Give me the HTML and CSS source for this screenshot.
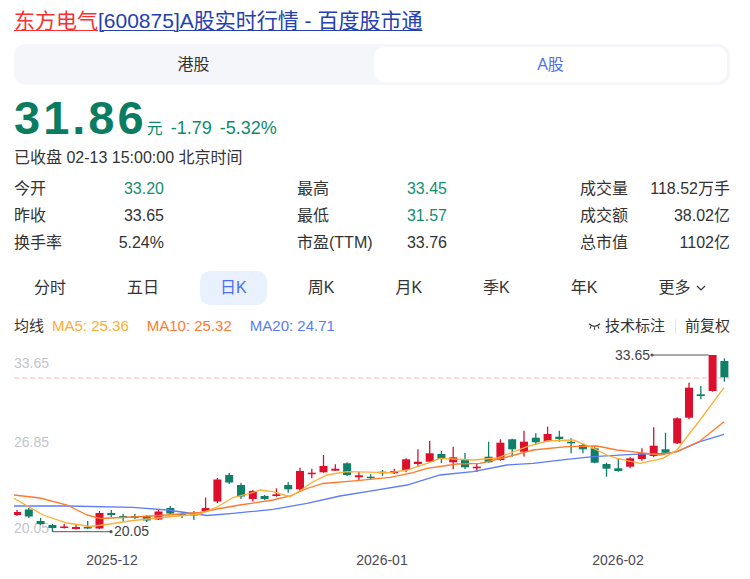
FILE: index.html
```html
<!DOCTYPE html>
<html lang="zh-CN">
<head>
<meta charset="utf-8">
<title>东方电气[600875]A股实时行情 - 百度股市通</title>
<link rel="stylesheet" href="styles.css">
</head>
<body>
<div class="page">
  <h1 class="title"><a class="t-red" href="#">东方电气</a><a class="t-blue" href="#">[600875]A股实时行情 - 百度股市通</a></h1>

  <div class="mkt-tabs">
    <div class="mkt-tab">港股</div>
    <div class="mkt-tab active">A股</div>
  </div>

  <div class="price-row">
    <span class="price">31.86</span><span class="unit">元</span><span class="chg">-1.79</span><span class="chg">-5.32%</span>
  </div>
  <div class="status">已收盘 02-13 15:00:00 北京时间</div>

  <div class="stats">
    <div class="stat"><span>今开</span><span class="green">33.20</span></div>
    <div class="stat"><span>最高</span><span class="green">33.45</span></div>
    <div class="stat"><span>成交量</span><span>118.52万手</span></div>
    <div class="stat"><span>昨收</span><span>33.65</span></div>
    <div class="stat"><span>最低</span><span class="green">31.57</span></div>
    <div class="stat"><span>成交额</span><span>38.02亿</span></div>
    <div class="stat"><span>换手率</span><span>5.24%</span></div>
    <div class="stat"><span>市盈(TTM)</span><span>33.76</span></div>
    <div class="stat"><span>总市值</span><span>1102亿</span></div>
  </div>

  <div class="periods">
    <div class="period">分时</div>
    <div class="period">五日</div>
    <div class="period active">日K</div>
    <div class="period">周K</div>
    <div class="period">月K</div>
    <div class="period">季K</div>
    <div class="period">年K</div>
    <div class="period">更多<svg class="chev" width="10" height="6" viewBox="0 0 10 6"><path d="M1 1 L5 5 L9 1" fill="none" stroke="#333" stroke-width="1.2"/></svg></div>
  </div>

  <div class="legend">
    <span class="lg-title">均线</span>
    <span class="ma5">MA5: 25.36</span>
    <span class="ma10">MA10: 25.32</span>
    <span class="ma20">MA20: 24.71</span>
    <span class="lg-right">
      <svg class="eye" width="13" height="9" viewBox="0 0 13 9"><path d="M1 1.8 Q6.5 7 12 1.8" fill="none" stroke="#333" stroke-width="1.2"/><path d="M3 4.2 L2 6.6 M6.5 5.3 L6.5 7.8 M10 4.2 L11 6.6" stroke="#333" stroke-width="1.1"/></svg>
      <span>技术标注</span>
      <span class="divider"></span>
      <span>前复权</span>
    </span>
  </div>

  <svg class="chart" width="722" height="234" viewBox="14 345 722 234">
    <text class="axis" x="14" y="368">33.65</text>
    <text class="axis" x="14" y="447">26.85</text>
    <text class="axis" x="14" y="533">20.05</text>
    <line class="cur" x1="14" y1="378" x2="730" y2="378"/>

    <g class="up">
      <line x1="17" y1="510" x2="17" y2="516"/><rect x="13" y="512" width="8" height="3"/>
      <line x1="64.2" y1="524" x2="64.2" y2="528.5"/><rect x="60.2" y="526.5" width="8" height="1.5"/>
      <line x1="76" y1="524" x2="76" y2="529.5"/><rect x="72" y="527" width="8" height="2"/>
      <line x1="99.5" y1="511" x2="99.5" y2="529"/><rect x="95.5" y="513" width="8" height="15.5"/>
      <line x1="158.5" y1="510" x2="158.5" y2="520"/><rect x="154.5" y="511.5" width="8" height="8"/>
      <line x1="205.6" y1="497.5" x2="205.6" y2="511"/><rect x="201.6" y="508" width="8" height="3"/>
      <line x1="217.4" y1="478" x2="217.4" y2="503"/><rect x="213.4" y="479.5" width="8" height="22"/>
      <line x1="252.8" y1="490" x2="252.8" y2="501.5"/><rect x="248.8" y="491" width="8" height="8"/>
      <line x1="276.4" y1="488.3" x2="276.4" y2="496.7"/><rect x="272.4" y="494.3" width="8" height="1.7"/>
      <line x1="300" y1="467.7" x2="300" y2="491.7"/><rect x="296" y="471" width="8" height="18.3"/>
      <line x1="311.8" y1="468.7" x2="311.8" y2="478.3"/><rect x="307.8" y="472.7" width="8" height="1.5"/>
      <line x1="323.5" y1="455" x2="323.5" y2="472.7"/><rect x="319.5" y="466" width="8" height="6.3"/>
      <line x1="335.3" y1="464.3" x2="335.3" y2="471"/><rect x="331.3" y="468.7" width="8" height="2"/>
      <line x1="358.9" y1="471.7" x2="358.9" y2="480"/><rect x="354.9" y="475.3" width="8" height="2"/>
      <line x1="394.3" y1="468.7" x2="394.3" y2="474"/><rect x="390.3" y="471" width="8" height="2.3"/>
      <line x1="406.1" y1="458.3" x2="406.1" y2="472.3"/><rect x="402.1" y="459.3" width="8" height="10.7"/>
      <line x1="417.9" y1="449.3" x2="417.9" y2="466.7"/><rect x="413.9" y="461.7" width="8" height="2.3"/>
      <line x1="429.7" y1="441" x2="429.7" y2="462.3"/><rect x="425.7" y="453.3" width="8" height="8.4"/>
      <line x1="453.2" y1="446.7" x2="453.2" y2="469.3"/><rect x="449.2" y="457.3" width="8" height="5"/>
      <line x1="476.8" y1="463" x2="476.8" y2="472"/><rect x="472.8" y="466.7" width="8" height="1.6"/>
      <line x1="500.4" y1="439.3" x2="500.4" y2="460.7"/><rect x="496.4" y="442.7" width="8" height="17.3"/>
      <line x1="524" y1="430.7" x2="524" y2="456.5"/><rect x="520" y="441.7" width="8" height="10"/>
      <line x1="547.6" y1="426.7" x2="547.6" y2="441.7"/><rect x="543.6" y="434" width="8" height="7"/>
      <line x1="630.1" y1="457.3" x2="630.1" y2="468.3"/><rect x="626.1" y="458.3" width="8" height="8.4"/>
      <line x1="641.9" y1="448.3" x2="641.9" y2="460.7"/><rect x="637.9" y="453.3" width="8" height="5.7"/>
      <line x1="653.7" y1="427.3" x2="653.7" y2="457.3"/><rect x="649.7" y="445.7" width="8" height="10.3"/>
      <line x1="677.2" y1="417.3" x2="677.2" y2="444"/><rect x="673.2" y="418.3" width="8" height="25"/>
      <line x1="689" y1="382.7" x2="689" y2="419.3"/><rect x="685" y="387.7" width="8" height="30"/>
      <line x1="712.6" y1="355" x2="712.6" y2="391.7"/><rect x="708.6" y="355" width="8" height="36"/>
    </g>

    <g class="down">
      <line x1="28.8" y1="508" x2="28.8" y2="518"/><rect x="24.8" y="509.5" width="8" height="7"/>
      <line x1="40.6" y1="518" x2="40.6" y2="525"/><rect x="36.6" y="521" width="8" height="3"/>
      <line x1="52.4" y1="524" x2="52.4" y2="531.7"/><rect x="48.4" y="525" width="8" height="3"/>
      <line x1="87.7" y1="521" x2="87.7" y2="529"/><rect x="83.7" y="527" width="8" height="1.5"/>
      <line x1="111.3" y1="510" x2="111.3" y2="517"/><rect x="107.3" y="513" width="8" height="2"/>
      <line x1="123.1" y1="514" x2="123.1" y2="521"/><rect x="119.1" y="516" width="8" height="2"/>
      <line x1="134.9" y1="514" x2="134.9" y2="519"/><rect x="130.9" y="516" width="8" height="2"/>
      <line x1="146.7" y1="515" x2="146.7" y2="522"/><rect x="142.7" y="516" width="8" height="4.5"/>
      <line x1="170.3" y1="506" x2="170.3" y2="515"/><rect x="166.3" y="508" width="8" height="5.5"/>
      <line x1="182.1" y1="512" x2="182.1" y2="518"/><rect x="178.1" y="514" width="8" height="1.5"/>
      <line x1="193.9" y1="511" x2="193.9" y2="520"/><rect x="189.9" y="514" width="8" height="1.5"/>
      <line x1="229.2" y1="473" x2="229.2" y2="484"/><rect x="225.2" y="475" width="8" height="7.5"/>
      <line x1="241" y1="483" x2="241" y2="499"/><rect x="237" y="485" width="8" height="11.5"/>
      <line x1="264.6" y1="495" x2="264.6" y2="500"/><rect x="260.6" y="496" width="8" height="3"/>
      <line x1="288.2" y1="482" x2="288.2" y2="492.7"/><rect x="284.2" y="485" width="8" height="4.3"/>
      <line x1="347.1" y1="462.3" x2="347.1" y2="476"/><rect x="343.1" y="463.3" width="8" height="11.7"/>
      <line x1="370.7" y1="474.3" x2="370.7" y2="479.3"/><rect x="366.7" y="476.7" width="8" height="1.5"/>
      <line x1="382.5" y1="470" x2="382.5" y2="476"/><rect x="378.5" y="471.7" width="8" height="1.6"/>
      <line x1="441.4" y1="451" x2="441.4" y2="463"/><rect x="437.4" y="454" width="8" height="5"/>
      <line x1="465" y1="453" x2="465" y2="469"/><rect x="461" y="460" width="8" height="7.3"/>
      <line x1="488.6" y1="441.7" x2="488.6" y2="462.7"/><rect x="484.6" y="456.7" width="8" height="5.6"/>
      <line x1="512.2" y1="438.7" x2="512.2" y2="456.7"/><rect x="508.2" y="439.3" width="8" height="10"/>
      <line x1="535.8" y1="433.3" x2="535.8" y2="445"/><rect x="531.8" y="437.7" width="8" height="4.6"/>
      <line x1="559.3" y1="430.7" x2="559.3" y2="441.7"/><rect x="555.3" y="436.7" width="8" height="2.3"/>
      <line x1="571.1" y1="438.3" x2="571.1" y2="453.3"/><rect x="567.1" y="441.7" width="8" height="1.6"/>
      <line x1="582.9" y1="443.3" x2="582.9" y2="453.3"/><rect x="578.9" y="445" width="8" height="4.3"/>
      <line x1="594.7" y1="447.3" x2="594.7" y2="463.3"/><rect x="590.7" y="448.3" width="8" height="14.4"/>
      <line x1="606.5" y1="462.7" x2="606.5" y2="476.7"/><rect x="602.5" y="464" width="8" height="4.7"/>
      <line x1="618.3" y1="458.3" x2="618.3" y2="471.7"/><rect x="614.3" y="468.3" width="8" height="2.7"/>
      <line x1="665.5" y1="432.7" x2="665.5" y2="453.3"/><rect x="661.5" y="449.3" width="8" height="3.4"/>
      <line x1="700.8" y1="386" x2="700.8" y2="399.3"/><rect x="696.8" y="394.3" width="8" height="1.7"/>
      <line x1="724.4" y1="358.3" x2="724.4" y2="381.7"/><rect x="720.4" y="361" width="8" height="16.3"/>
    </g>

    <polyline class="ma20l" points="14,506 67,506 133,507.3 167,510 207,515.5 233,513.3 250,511.7 273,509.3 307,503.3 340,496 373,490.7 407,485 440,475 473,471.7 507,465 533,463.3 567,459.3 593,456.7 633,454.3 667,453.3 677,451.7 700,441.7 724,434.3"/>
    <polyline class="ma10l" points="14,495 40,498 67,505 87,515 100,518.5 133,517 167,515 200,512.5 217,509 240,505 273,500 290,496 307,488.5 323,483.5 357,480.7 390,477.3 413,472.7 427,468.3 457,464 480,463.3 507,457 533,450 567,446.7 597,446 617,450 640,452.7 660,455 677,451.7 700,441 724,421.7"/>
    <polyline class="ma5l" points="14,498.3 43,515 67,523 90,526.5 110,524 133,520.5 167,517 200,514 217,507 233,497.5 250,493.5 260,490 273,491.7 290,496.7 300,490.7 313,481.7 327,475 347,471.7 390,472.7 407,470 427,463.3 440,458.3 473,460 497,458 527,446.7 547,441 573,440 590,446.7 607,455 617,458.3 640,463.3 663,458.3 677,450 700,420 724,387.7"/>

    <line class="mk" x1="652" y1="355" x2="708.6" y2="355"/>
    <circle class="mkdot" cx="652" cy="355" r="1.6"/>
    <text class="mktext" x="650" y="359.5" text-anchor="end">33.65</text>
    <line class="mk" x1="52.4" y1="531.7" x2="111" y2="531.7"/>
    <circle class="mkdot" cx="111" cy="531.7" r="1.6"/>
    <text class="mktext" x="114" y="536">20.05</text>

    <text class="date" x="112" y="565" text-anchor="middle">2025-12</text>
    <text class="date" x="382" y="565" text-anchor="middle">2026-01</text>
    <text class="date" x="618" y="565" text-anchor="middle">2026-02</text>
  </svg>
</div>
</body>
</html>
```

FILE: styles.css
```css
* { box-sizing: border-box; }
html, body { margin: 0; padding: 0; background: #fff; }
body {
  font-family: "Liberation Sans", "Noto Sans CJK SC", sans-serif;
  color: #333;
  font-size: 16px;
}
.page {
  width: 716px;
  margin-left: 14px;
  padding-top: 8px;
}
.title {
  margin: 0;
  font-size: 21px;
  font-weight: normal;
  line-height: 26px;
  white-space: nowrap;
}
.title a { text-decoration: underline; text-underline-offset: 2px; text-decoration-thickness: 1px; }
.t-red { color: #f73131; }
.t-blue { color: #2440b3; }

.mkt-tabs {
  margin-top: 10px;
  height: 41px;
  padding: 3px;
  background: #f5f6f9;
  border-radius: 12px;
  display: flex;
  gap: 4px;
}
.mkt-tab {
  flex: 1;
  text-align: center;
  line-height: 35px;
  font-size: 16px;
  color: #333;
  border-radius: 10px;
}
.mkt-tab.active { background: #fff; color: #4e6ef2; }

.price-row {
  margin-top: 10px;
  display: flex;
  align-items: baseline;
  height: 46px;
  color: #0f8a6d;
}
.price {
  font-size: 47px;
  line-height: 46px;
  font-weight: bold;
  letter-spacing: 3px;
  color: #0a7c62;
}
.unit { font-size: 16px; }
.chg { font-size: 18px; margin-left: 8px; }

.status {
  margin-top: 6px;
  line-height: 22px;
  font-size: 16px;
  color: #333;
}

.stats {
  margin-top: 6px;
  display: grid;
  grid-template-columns: repeat(3, 150px);
  justify-content: space-between;
  font-size: 16px;
  line-height: 27px;
}
.stat { display: flex; justify-content: space-between; white-space: nowrap; }
.green { color: #12906f; }

.periods {
  margin-top: 15px;
  display: flex;
  gap: 21px;
}
.period {
  padding: 0 20px;
  height: 34px;
  line-height: 34px;
  font-size: 16px;
  color: #333;
  border-radius: 10px;
  white-space: nowrap;
  display: flex;
  align-items: center;
}
.period.active { background: #e9f1ff; color: #4e6ef2; }
.chev { margin-left: 6px; }

.legend {
  margin-top: 11px;
  display: flex;
  align-items: center;
  line-height: 20px;
  font-size: 15px;
  white-space: nowrap;
}
.lg-title { color: #333; }
.ma5 { color: #ffac33; margin-left: 8px; }
.ma10 { color: #ff7a2e; margin-left: 18px; }
.ma20 { color: #5b7cfa; margin-left: 18px; }
.lg-right {
  margin-left: auto;
  display: flex;
  align-items: center;
  color: #333;
}
.eye { margin-right: 4px; }
.divider {
  width: 1px;
  height: 15px;
  background: #e6e6e6;
  margin: 0 9px 0 10px;
}

.chart { display: block; margin-top: 9px; font-family: "Liberation Sans", sans-serif; }
.axis { font-size: 14px; fill: #c2c5cc; }
.cur { stroke: #ffb4b4; stroke-width: 1; stroke-dasharray: 5 3; }
.up line { stroke: #dc0f2d; stroke-width: 1.3; }
.up rect { fill: #dc0f2d; }
.down line { stroke: #0f7f67; stroke-width: 1.3; }
.down rect { fill: #0f7f67; }
.ma5l { fill: none; stroke: #ffad33; stroke-width: 1.3; }
.ma10l { fill: none; stroke: #ff7a2a; stroke-width: 1.3; }
.ma20l { fill: none; stroke: #5c7cfa; stroke-width: 1.3; }
.mk { stroke: #555; stroke-width: 1; }
.mkdot { fill: #555; }
.mktext { font-size: 14px; fill: #444; }
.date { font-size: 14px; fill: #4a4a52; }
```
